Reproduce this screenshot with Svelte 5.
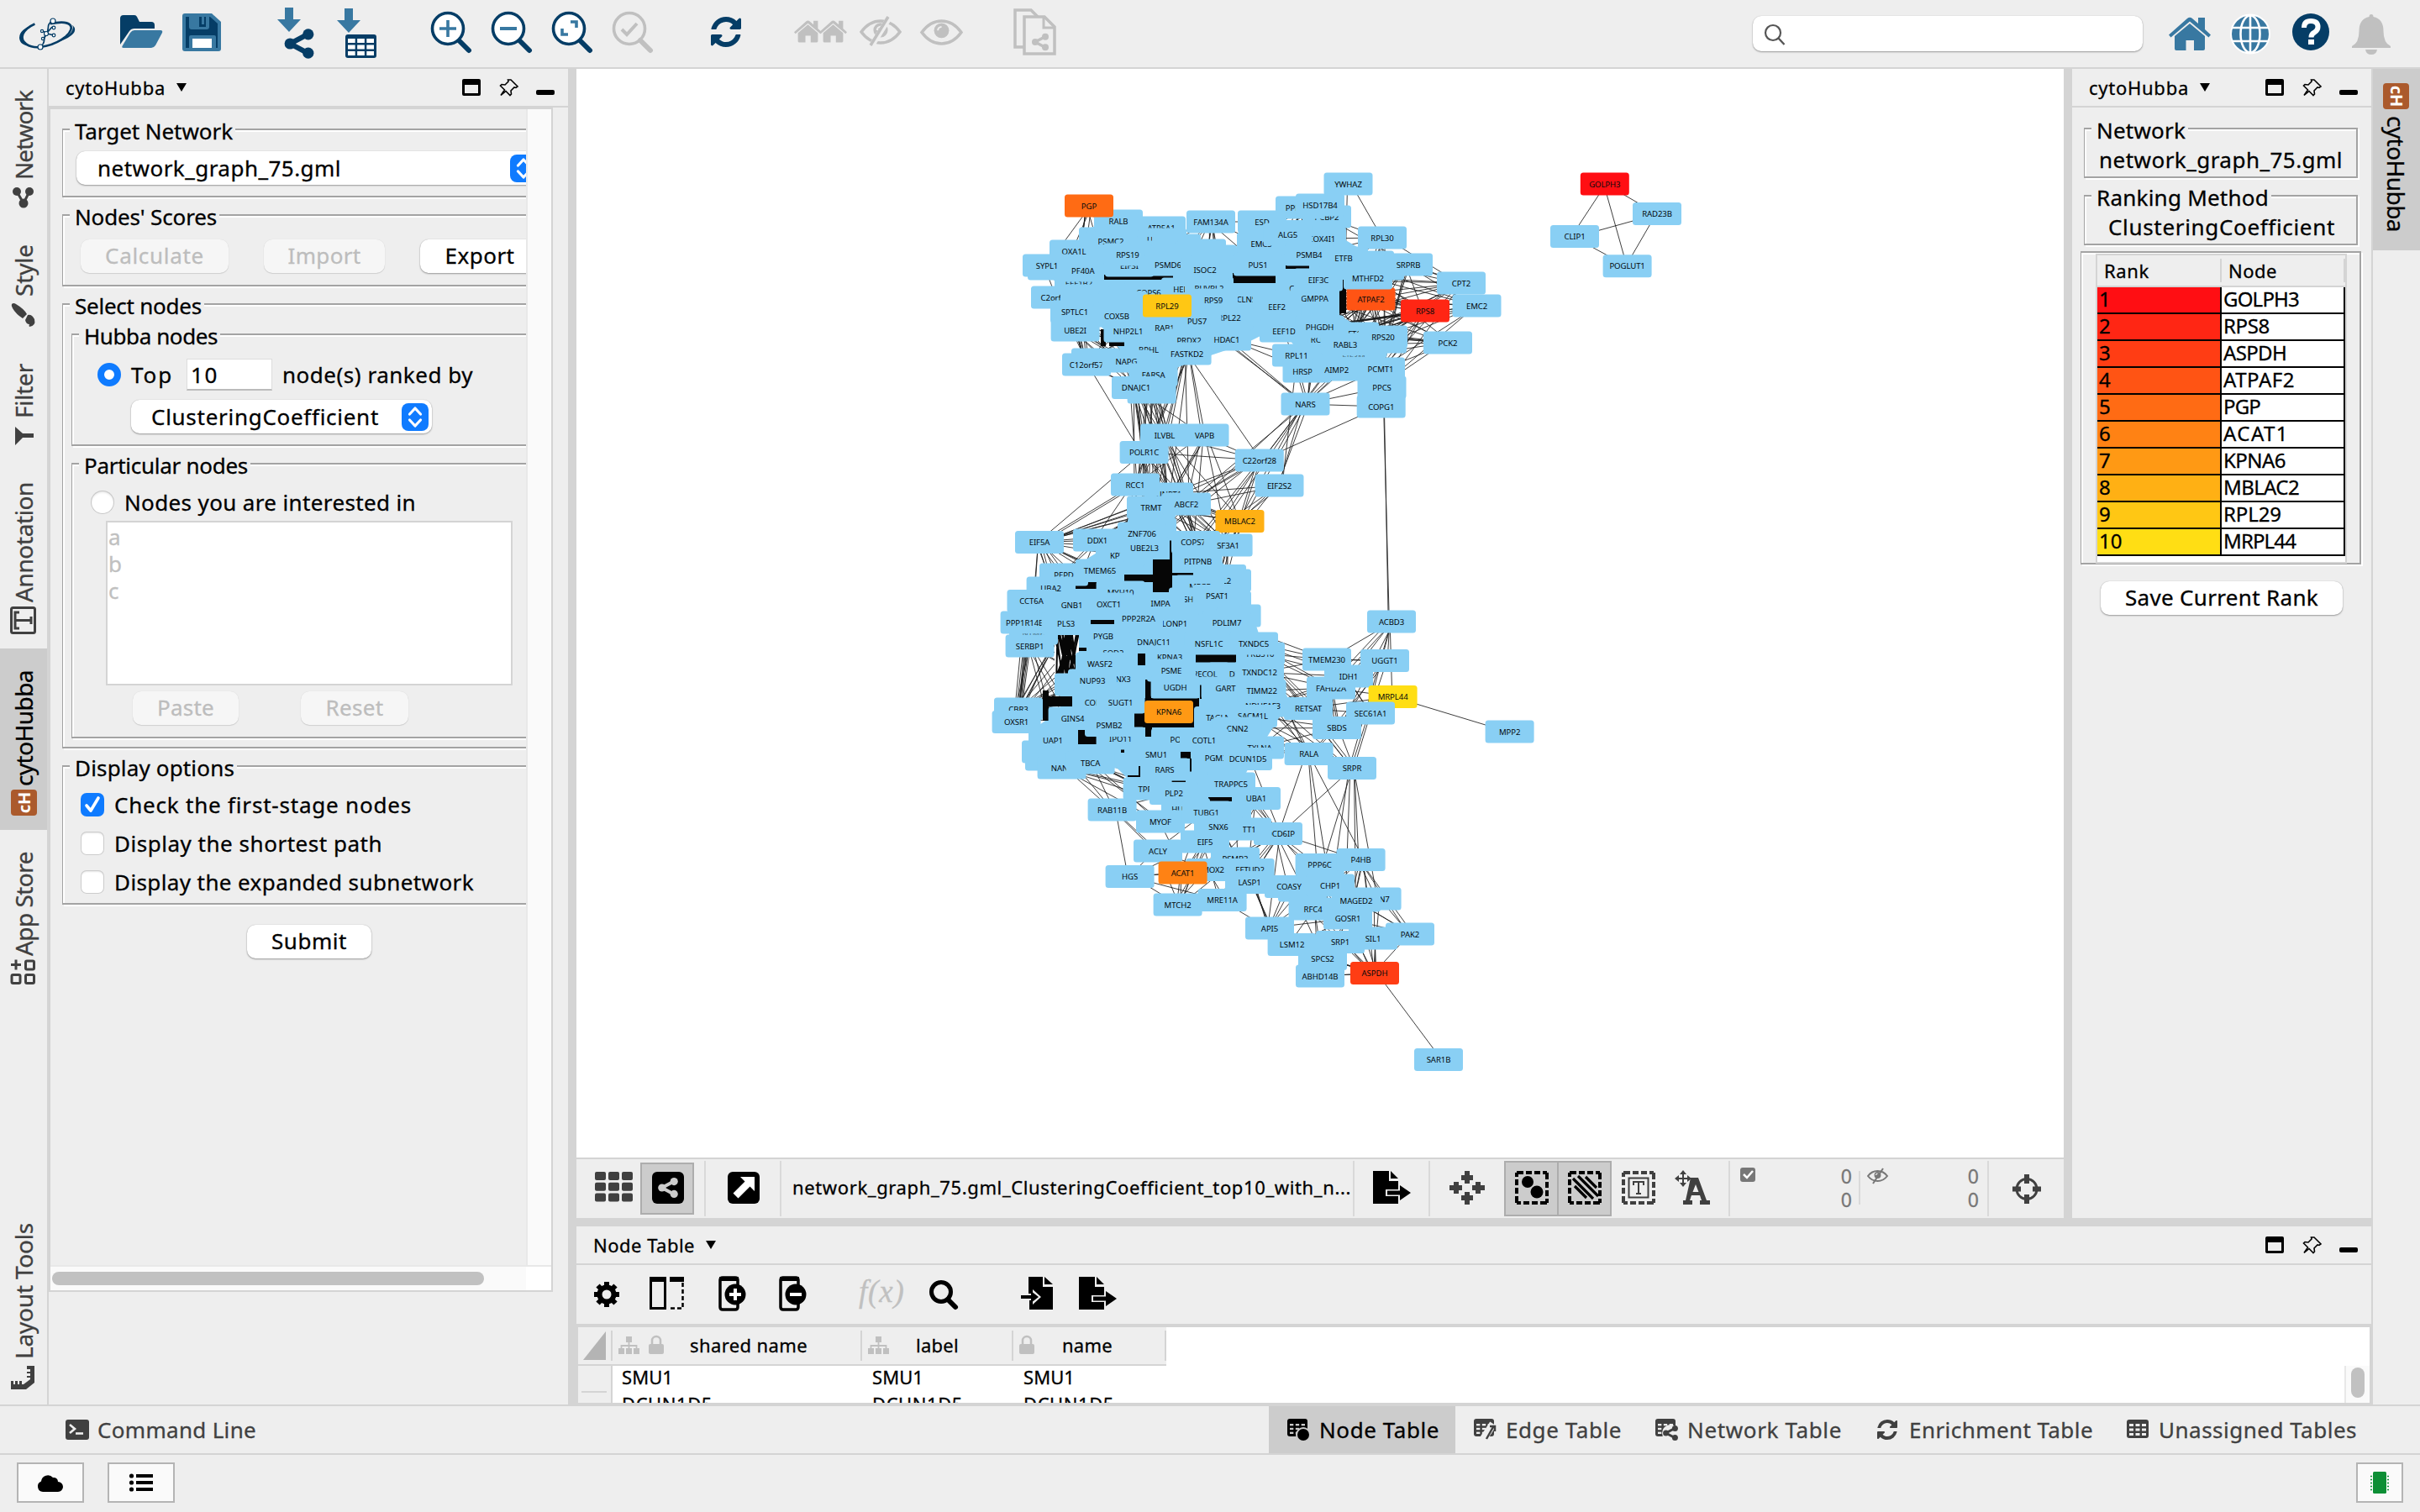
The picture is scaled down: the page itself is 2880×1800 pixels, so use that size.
<script>
  // Stretches or tightens a label's tracking so that it fills the given length.
  function fit(node, length) {
    if (!length) return;
    const vertical = getComputedStyle(node).writingMode !== 'horizontal-tb';
    const box = node.getBoundingClientRect();
    const natural = vertical ? box.height : box.width;
    node.style.letterSpacing = (length - natural) / node.textContent.length + 'px';
  }

  const NAVY = '#053d66';
  const BLUE = '#3878a1';
  const OFF = '#c0c0c0';
  const INK = '#404040';

  const share = (x, y, s, c, r = 6) =>
    `<g fill="${c}" stroke="${c}"><path d="M${x + s * 0.8} ${y + s * 0.18}L${x + s * 0.2} ${y + s * 0.5}L${x + s * 0.8} ${y + s * 0.82}" fill="none" stroke-width="${s * 0.17}"/><circle cx="${x + s * 0.8}" cy="${y + s * 0.19}" r="${r}" stroke="none"/><circle cx="${x + s * 0.2}" cy="${y + s * 0.5}" r="${r}" stroke="none"/><circle cx="${x + s * 0.8}" cy="${y + s * 0.81}" r="${r}" stroke="none"/></g>`;
  const lens = (x, c, inner) =>
    `<path d="M${x + 34} 48l12 12" stroke="${c}" stroke-width="6" stroke-linecap="round"/><circle cx="${x + 21}" cy="34" r="18.5" fill="${c === OFF ? 'none' : '#fff'}" stroke="${c}" stroke-width="3.6"/>${inner}`;
  const refresh = (x, y, s, c) =>
    `<path fill="${c}" transform="translate(${x} ${y}) scale(${s / 1536})" d="M1511 928q0 5-1 7-64 268-268 434.500t-478 166.500q-146 0-282.500-55t-243.500-157l-129 129q-19 19-45 19t-45-19-19-45v-448q0-26 19-45t45-19h448q26 0 45 19t19 45-19 45l-137 137q71 66 161 102t187 36q134 0 250-65t186-179q11-17 53-117 8-23 30-23h192q13 0 22.500 9.500t9.500 22.500zm25-800v448q0 26-19 45t-45 19h-448q-26 0-45-19t-19-45 19-45l138-138q-148-137-349-137-134 0-250 65t-186 179q-11 17-53 117-8 23-30 23h-199q-13 0-22.500-9.500t-9.500-22.500v-7q65-268 270-434.500t480-166.500q146 0 284 55.500t245 156.500l130-129q19-19 45-19t45 19 19 45z"/>`;
  const eye = (x, y, w, h, c, sw) => {
    const m = y + h / 2;
    return `<path d="M${x + 1} ${m}Q${x + w * 0.22} ${y} ${x + w / 2} ${y}T${x + w - 1} ${m}Q${x + w * 0.78} ${y + h} ${x + w / 2} ${y + h}T${x + 1} ${m}z" fill="none" stroke="${c}" stroke-width="${sw}"/><circle cx="${x + w / 2}" cy="${m - h * 0.08}" r="${h * 0.33}" fill="${c}"/><path d="M${x + w / 2 - h * 0.16} ${m - h * 0.08}a${h * 0.16} ${h * 0.16} 0 0 1 ${h * 0.16}-${h * 0.16}" fill="none" stroke="#eee" stroke-width="${sw * 0.6}"/>`;
  };
  const house = (x, y, s, c) =>
    `<path transform="translate(${x} ${y}) scale(${s / 50})" fill="${c}" d="M0 21.500L22 2q3-2.500 6 0l7 6V1h8v14l7 6.500-2.500 3L25 5.500 2.500 24.500zM7 23L25 8l18 15v15q0 2-2 2H30V28h-9.500v12H9q-2 0-2-2z"/>`;
  const grid = (x, y, w, h, c, bg, top = 5) => {
    const cw = (w - 11) / 3;
    const ch = (h - top - 8) / 3;
    let s = `<rect x="${x}" y="${y}" width="${w}" height="${h}" rx="3" fill="${c}"/>`;
    for (let r = 0; r < 3; r++)
      for (let k = 0; k < 3; k++)
        s += `<rect x="${x + 3 + k * (cw + 2.500)}" y="${y + top + r * (ch + 2.500)}" width="${cw}" height="${ch}" fill="${bg}"/>`;
    return s;
  };
  const dashed = (x, c) =>
    `<rect x="${x + 2}" y="1396" width="36" height="36" fill="none" stroke="${c}" stroke-width="4" stroke-dasharray="8 3 7 3 7 3 5 0"/>`;
  const exportDoc = (x, y) =>
    `<path d="M${x} ${y}h19v12h11v10h-15v8h15v9h-30zM${x + 21} ${y}l9 9h-9z"/><path d="M${x + 17} ${y + 23.500}h15v-6.500l13 9-13 9v-6.500h-15z"/>`;

  const mainTools = [
    { x: 22, w: 70, d: `<g transform="rotate(-10 57 42)"><path d="M44 26C28 30 22 40 30 48C40 58 64 55 78 47C92 38 88 28 62 29" fill="none" stroke="${NAVY}" stroke-width="2.6"/><path d="M56 54q34-6 32-19q10 14-32 19z" fill="${NAVY}"/><path d="M42 27q-16 5-16 13q-1 7 8 11q-12-3-11-12q2-10 19-12z" fill="${NAVY}"/></g><path d="M62 25C54 30 60 34 55 40S56 50 48 56M50 37l6 2 6-7M52 46l4-6 8 2" fill="none" stroke="${NAVY}" stroke-width="1.700"/><g fill="#fff" stroke="${NAVY}" stroke-width="1.200"><circle cx="63" cy="25" r="3"/><circle cx="48" cy="56" r="3"/><circle cx="55" cy="40" r="2.500"/><circle cx="50" cy="37" r="1.600"/><circle cx="64" cy="33" r="1.800"/><circle cx="64" cy="42" r="1.800"/><circle cx="51" cy="46" r="1.600"/></g>` },
    { x: 140, w: 56, d: `<path d="M143 22a4 4 0 0 1 4-4h13q2 0 3 2l3 6h14q4 0 4 4v4h-24q-4 0-6 3l-11 16z" fill="${NAVY}"/><path d="M160 36h31q3 0 2 3l-8 15q-2 3-5 3h-33q-3 0-1-3l9-15q2-3 5-3z" fill="${BLUE}"/>` },
    { x: 215, w: 50, d: `<path d="M220 16h32l11 10v32a3 3 0 0 1-3 3h-40a3 3 0 0 1-3-3v-39a3 3 0 0 1 3-3z" fill="${BLUE}"/><path d="M221 20h29l9 8v29h-2v-13q0-2-2-2h-28q-2 0-2 2v13h-4z" fill="${NAVY}"/><path d="M225 18h24v14q0 3-3 3h-18q-3 0-3-3z" fill="${BLUE}"/><path d="M237 20h8v12h-8z" fill="${NAVY}"/><path d="M240 20h3v9h-3z" fill="${BLUE}"/><path d="M229 46h23v11h-23z" fill="#fff"/>` },
    { x: 328, w: 50, d: `<path d="M339 9h10v14h9l-14 15-14-15h9z" fill="${BLUE}"/>${share(338, 34, 36, NAVY, 6.600)}` },
    { x: 400, w: 52, d: `<path d="M410 10h10v14h9l-14 15-14-15h9z" fill="${BLUE}"/>${grid(411, 41, 37, 28, NAVY, '#fff')}` },
    { x: 510, w: 52, d: lens(512, NAVY, `<path d="M523 34h20M533 24v20" stroke="${BLUE}" stroke-width="3.600"/>`) },
    { x: 582, w: 52, d: lens(584, NAVY, `<path d="M595 34h20" stroke="${BLUE}" stroke-width="4"/>`) },
    { x: 654, w: 52, d: lens(656, NAVY, `<path d="M679 26h7v7M669 34v7h7" fill="none" stroke="${BLUE}" stroke-width="3.600"/>`) },
    { x: 726, w: 52, d: lens(728, OFF, `<path d="M740 35l6 6 12-13" fill="none" stroke="${OFF}" stroke-width="4"/>`) },
    { x: 843, w: 42, d: refresh(846, 20, 36, NAVY) },
    { x: 943, w: 68, d: house(945, 24, 33, OFF) + house(975, 24, 33, OFF) },
    { x: 1021, w: 54, d: eye(1024, 25, 48, 26, OFF, 3.500) + `<path d="M1059 20l-22 35" stroke="#eee" stroke-width="7"/><path d="M1057 20l-21 34" stroke="${OFF}" stroke-width="3.500"/>` },
    { x: 1093, w: 56, d: eye(1096, 25, 49, 27, OFF, 3.500) },
    { x: 1204, w: 56, d: `<path d="M1219 56h-11V12h19l8 8" fill="none" stroke="${OFF}" stroke-width="3.500"/><path d="M1219 20h24l12 12v32h-36z" fill="#eee" stroke="${OFF}" stroke-width="3.500"/><path d="M1242 20v13h13" fill="none" stroke="${OFF}" stroke-width="3"/>${share(1228, 40, 20, OFF, 4)}` }
  ];
  const helpTools = [
    { x: 2579, w: 56, d: house(2581, 20, 50, BLUE) },
    { x: 2651, w: 54, d: `<circle cx="2678" cy="40.500" r="24" fill="#fff"/><circle cx="2678" cy="40.500" r="22" fill="${BLUE}"/><path d="M2656 33h44M2656 49h44M2678 18v45" stroke="#fff" stroke-width="2.600"/><ellipse cx="2678" cy="40.500" rx="11.500" ry="22" fill="none" stroke="#fff" stroke-width="2.600"/>` },
    { x: 2725, w: 50, d: `<circle cx="2750" cy="38" r="22" fill="${NAVY}"/><path d="M2742 33q0-8 8-8 8.500 0 8.500 7 0 4-4 6.500-4 2-4 6" fill="none" stroke="#fff" stroke-width="6"/><path d="M2747 47h7v6h-7z" fill="#fff"/>` },
    { x: 2797, w: 50, d: `<path d="M2822 17q2.500 0 2.500 3 12 2.500 12 17 0 14 8.500 18v2h-46v-2q8.500-4 8.500-18 0-14.500 12-17 0-3 2.500-3z" fill="${OFF}"/><path d="M2815 59q1 6 7 6t7-6z" fill="${OFF}"/>` }
  ];
  const winTools = `<path d="M2 0h18q2 0 2 2v16q0 2-2 2H2q-2 0-2-2V2q0-2 2-2zM3 7v10h16V7z" fill-rule="evenodd"/><path d="M58 1l8 8-2 1.500-2-.5-4 4 .5 4-1.500 1.500-5-5-6 5 4.500-6.500-5-5 1.500-1.500 4 .5 4-4-.5-2z" fill="none" stroke="#000" stroke-width="1.600"/><rect x="88" y="13" width="22" height="6" rx="2"/>`;

  const cH = (y, a, x) =>
    `<rect x="${x}" y="${y}" width="31" height="31" rx="4" fill="#ab5a2c"/><text transform="translate(${x + 15.500} ${y + 15.500}) rotate(${a})" x="0" y="7" text-anchor="middle" font-size="20" font-weight="700" fill="#fff" font-family="Noto Sans">cH</text>`;

  // Side tabs: vertical extent of the tab, length of its label, icon box
  const sideTabs = [
    { label: 'Network', h: 183, len: 106, iy: 222, ih: 27, d: `<g fill="${INK}"><circle cx="20" cy="229" r="5"/><circle cx="35" cy="229" r="5"/><circle cx="28" cy="243" r="5.500"/></g><path d="M20 229l8 14 7-14" fill="none" stroke="${INK}" stroke-width="3"/>` },
    { label: 'Style', h: 142, len: 62, iy: 361, ih: 30, d: `<path d="M14 363q2-2 5 0 10 6 13 12l-5 5q-8-5-12-12-2-3-1-5zM33 376q5-1 8 5 2 8-6 9-1-1 0-3-4 0-5-5z" fill="${INK}"/>` },
    { label: 'Filter', h: 141, len: 65, iy: 508, ih: 24, d: `<path d="M18 509l9 8h13v5h-13l-9 9z" fill="${INK}"/>` },
    { label: 'Annotation', h: 224, len: 143, iy: 723, ih: 34, d: `<rect x="13.500" y="725.500" width="28" height="30" rx="2" fill="none" stroke="${INK}" stroke-width="3"/><path d="M23 731h-5v19h5M18 740.500h19M37 736v9" fill="none" stroke="${INK}" stroke-width="3"/>` },
    { label: 'cytoHubba', h: 216, len: 138, active: true, iy: 940, ih: 31, d: cH(940, -90, 13) },
    { label: 'App Store', h: 202, len: 124, iy: 1142, ih: 32, d: `<g fill="none" stroke="${INK}" stroke-width="3"><rect x="14" y="1161.500" width="10" height="10" rx="1.500"/><rect x="30.500" y="1161.500" width="10" height="10" rx="1.500"/><rect x="30.500" y="1145" width="10" height="10" rx="1.500"/><path d="M13 1149.500h12M19 1143.500v12"/></g>` }
  ];
  const layoutTab = { label: 'Layout Tools', len: 162, iy: 1625, ih: 30, d: `<path d="M32 1626h9v20l-10 8h-18v-10h3v4h2v-4h3v4h2v-4h3v4h2l8-6v-2h-4v-2h4v-3h-4v-2h4v-3h-4z" fill="${INK}"/>` };

  const viewTools = {
    grid: { x: 706, w: 50, d: [0, 1, 2].map((r) => [0, 1, 2].map((c) => `<rect x="${708 + c * 16}" y="${1395 + r * 12.700}" width="13" height="10" rx="2" fill="${INK}"/>`).join('')).join('') },
    share: { x: 776, w: 38, d: `<rect x="776" y="1395" width="38" height="38" rx="6"/>${share(783, 1402, 24, '#ccc', 4.600)}` },
    ext: { x: 866, w: 38, d: `<rect x="866" y="1395" width="38" height="38" rx="6"/><path d="M881 1401h17v17l-5.500-5.500-14 14-6-6 14-14z" fill="#fff"/>` },
    exp: { x: 1634, w: 46, d: exportDoc(1634, 1394) },
    move: { x: 1724, w: 44, d: `<path d="M1743 1394h6v5h4v6h-4v4h-6v-4h-4v-6h4zM1743 1434h6v-5h4v-6h-4v-4h-6v4h-4v6h4zM1725 1411v6h5v4h6v-4h4v-6h-4v-4h-6v4zM1767 1411v6h-5v4h-6v-4h-4v-6h4v-4h6v4z" fill="${INK}"/>` },
    nodes: { x: 1802, w: 40, d: dashed(1802, '#000') + `<circle cx="1817" cy="1407" r="7"/><circle cx="1828" cy="1419" r="7.500"/>` },
    edges: { x: 1866, w: 40, d: dashed(1866, '#000') + `<path d="M1872 1403l24 24M1878 1400l24 24M1874 1412l14 14M1887 1401l13 13" stroke="#000" stroke-width="3.200"/>` },
    text: { x: 1930, w: 40, d: dashed(1930, INK) + `<rect x="1938.500" y="1402.500" width="23" height="23" fill="none" stroke="${INK}" stroke-width="2"/><path d="M1944 1411v-4h12v4M1950 1407v14M1947 1421h6" fill="none" stroke="${INK}" stroke-width="2"/>` },
    label: { x: 1993, w: 44, d: `<path d="M2003 1393l4 5h-3v4h4v-3l5 4-5 4v-3h-4v4h3l-4 5-4-5h3v-4h-4v3l-5-4 5-4v3h4v-4h-3z" fill="${INK}"/><path d="M2012 1402h9l10 27h4v5h-12v-5h2l-2-6h-10l-2 6h3v5h-11v-5h3zM2018 1410l-3.500 9h7z" fill="${INK}" fill-rule="evenodd"/>` },
    target: { x: 2393, w: 38, d: `<circle cx="2413" cy="1415.500" r="12" fill="none" stroke="${INK}" stroke-width="3"/><path d="M2413 1398v11M2413 1422v11M2396 1415.500h10M2420 1415.500h10" stroke="${INK}" stroke-width="6"/>` },
    check: { x: 2071, w: 18, d: `<rect x="2071" y="1390" width="18" height="17" rx="3" fill="#777"/><path d="M2075 1398l4 4 7-8" fill="none" stroke="#fff" stroke-width="2.500"/>` },
    hidden: { x: 2222, w: 26, d: eye(2222, 1394, 25, 12, '#777', 2) + `<path d="M2241 1391l-12 18" stroke="#777" stroke-width="2"/>` }
  };

  const plusDoc = (x, s) =>
    `<path d="M${x + 10} 1521h10q3 0 3 3v8M${x + 23} 1552v4q0 3-3 3h-15q-3 0-3-3v-32q0-3 3-3h8" fill="none" stroke="#000" stroke-width="3.500"/><path d="M${x + 1} 1520h23v5h-23z"/><circle cx="${x + 20}" cy="1541" r="12.500"/><path d="${s}" stroke="#fff" stroke-width="4"/>`;
  const tableTools = [
    { x: 706, w: 34, d: `<circle cx="722" cy="1541" r="8.500" fill="none" stroke="#000" stroke-width="6"/><path d="M722 1526v6M722 1550v6M707 1541h6M731 1541h6M711.500 1530.500l4 4M728.500 1547.500l4 4M732.500 1530.500l-4 4M715.500 1547.500l-4 4" stroke="#000" stroke-width="6"/>` },
    { x: 772, w: 44, d: `<path d="M774.500 1521.500h17v36h-17z" fill="none" stroke="#000" stroke-width="3"/><path d="M773 1520h20v6h-20zM797 1520h17v6h-17z"/><path d="M798 1557.500h14.500V1526" fill="none" stroke="#000" stroke-width="2.500" stroke-dasharray="5 3"/>` },
    { x: 854, w: 36, d: plusDoc(855, 'M868 1541h14M875 1534v14') },
    { x: 926, w: 36, d: plusDoc(927, 'M940 1541h14') },
    { text: 'f(x)', x: 1020, w: 60 },
    { x: 1104, w: 38, d: `<circle cx="1120" cy="1538" r="11.500" fill="none" stroke="#000" stroke-width="5"/><path d="M1128 1547l9 9" stroke="#000" stroke-width="6" stroke-linecap="round"/>` },
    { x: 1214, w: 42, d: `<path d="M1224 1520h17v12h12v27h-28v-11l4 0v5l10-9-10-9v5h-5zM1243 1520l10 9h-10z"/><path d="M1215 1542h12v-5l9 7-9 7v-5h-12z"/>` },
    { x: 1284, w: 46, d: exportDoc(1284, 1520) }
  ];

  const tree = (x) => `<g fill="${OFF}"><rect x="${x + 9}" y="1591" width="7" height="7"/><rect x="${x}" y="1605" width="7" height="7"/><rect x="${x + 9}" y="1605" width="7" height="7"/><rect x="${x + 18}" y="1605" width="7" height="7"/></g><path d="M${x + 12.500} 1598v7M${x + 3.500} 1605v-3h18v3" fill="none" stroke="${OFF}" stroke-width="1.800"/>`;
  const lock = (x) => `<rect x="${x}" y="1600" width="18" height="12" rx="2" fill="${OFF}"/><path d="M${x + 4} 1601v-5a5 5 0 0 1 10 0v5" fill="none" stroke="${OFF}" stroke-width="2.500"/>`;
  const columns = [
    { name: 'shared name', cls: 'c1', len: 140, x: 736, w: 56, d: tree(736) + lock(772) },
    { name: 'label', cls: 'c2', len: 51, x: 1034, w: 26, d: tree(1034) },
    { name: 'name', cls: 'c3', len: 60, x: 1214, w: 20, d: lock(1214) }
  ];

  const smallTable = (x, c) => grid(x, 1689, 24, 21, c, '#eee', 6);
  const bottomTabs = [
    { label: 'Node Table', cls: 't1', len: 143, x: 1532, d: grid(1532, 1689, 24, 21, '#000', '#ccc', 6) + `<circle cx="1551" cy="1708" r="9" fill="#ccc"/><circle cx="1551" cy="1708" r="7"/>` },
    { label: 'Edge Table', cls: 't2', len: 138, x: 1755, d: smallTable(1755, INK) + `<path d="M1778 1695l-13 20" stroke="#eee" stroke-width="9"/><path d="M1779 1697l-9 16M1774 1698h6v6" fill="none" stroke="${INK}" stroke-width="2.500"/>` },
    { label: 'Network Table', cls: 't3', len: 184, x: 1970, d: smallTable(1970, INK) + `<circle cx="1988" cy="1706" r="10" fill="#eee"/>` + share(1979, 1697, 18, INK, 3.500) },
    { label: 'Enrichment Table', cls: 't4', len: 219, x: 2234, d: refresh(2234, 1690, 24, INK) },
    { label: 'Unassigned Tables', cls: 't5', len: 236, x: 2531, d: grid(2531, 1690, 26, 22, INK, '#eee', 5) }
  ];

  const ranking = [
    ['GOLPH3', 90, '#ff0e13'], ['RPS8', 55, '#ff2614'], ['ASPDH', 75, '#ff3d14'], ['ATPAF2', 85, '#ff5414'], ['PGP', 44, '#ff6b14'],
    ['ACAT1', 78, '#ff8214'], ['KPNA6', 74, '#ff9914'], ['MBLAC2', 90, '#ffb014'], ['RPL29', 69, '#ffc714'], ['MRPL44', 86, '#ffde14']
  ];

  // Graph nodes in paint order: name, centre x, centre y
  const nodes = [
    ['', 1313, 284], ['PSMC2', 1322, 287], ['', 1252, 320], ['ATP5A1', 1382, 271], ['PCBP2', 1579, 258], ['PPP2CA', 1547, 247], ['RALB', 1331, 263],
    ['UBE2D3', 1383, 285], ['FAM134A', 1441, 264], ['ESD', 1502, 264], ['COX4I1', 1573, 284], ['EMC3', 1501, 290], ['ALG5', 1532.6, 279], ['HSD17B4', 1571, 244], ['YWHAZ', 1604.5, 219],
    ['EIF3I', 1344, 316], ['DLD', 1406, 300], ['', 1400, 292], ['TIAL3', 1443, 305], ['', 1430, 298], ['', 1630, 312], ['', 1642, 320], ['', 1370, 300],
    ['RPL30', 1645, 283], ['RPS19', 1342, 303], ['EEF1B2', 1284, 337], ['PRPF40A', 1283, 322], ['OXA1L', 1278, 299], ['SYPL1', 1246, 316],
    ['PSMD6', 1390, 315], ['HEBP1', 1411, 344], ['RUVBL2', 1439, 343], ['ISOC2', 1434, 321], ['PUS1', 1497, 315], ['ETFB', 1599, 307], ['PSMB4', 1558, 303], ['SRPRB', 1676, 315],
    ['COPS4', 1549, 343], ['EIF3C', 1569, 333], ['C2orf47', 1256, 354], ['', 1291, 352], ['COPS6', 1367, 348], ['CLNS1A', 1489, 356], ['RPS9', 1444, 357],
    ['GMPPA', 1564.5, 355], ['EEF2', 1519.6, 365], ['CPT2', 1739, 337], ['EMC2', 1757.5, 364], ['ATPAF2', 1631.5, 356, '#ff5414'], ['MTHFD2', 1628, 331], ['RPS8', 1696, 370, '#ff2614'],
    ['', 1336, 360], ['SPTLC1', 1279, 371], ['COX5B', 1329, 376], ['RPL22', 1463, 378], ['RAB1A', 1389, 390], ['PRDX2', 1415, 405], ['PUS7', 1424.5, 382], ['RPL29', 1389, 364, '#ffc714'],
    ['UBE2I', 1279.6, 393], ['NHP2L1', 1342.5, 394], ['HDAC1', 1460, 404], ['EIF3M', 1611, 424], ['RCN2', 1572, 404], ['FT1', 1612, 397], ['EEF1D', 1528, 394], ['PHGDH', 1570.6, 389],
    ['', 1645, 407], ['RPS20', 1646, 401], ['RABL3', 1601, 410], ['RPL11', 1543, 423], ['PCK2', 1723, 408], ['HRSP12', 1555.5, 442], ['', 1620, 438], ['AIMP2', 1590.6, 440],
    ['PCMT1', 1643, 439], ['PPCS', 1644.5, 461], ['COPG1', 1643.7, 484], ['NARS', 1553.5, 481], ['', 1304, 428], ['C12orf57', 1293, 434], ['BPHL', 1367, 416], ['FASTKD2', 1412.6, 421],
    ['NAPG', 1340.5, 430], ['FARSA', 1372.6, 446], ['', 1370.6, 467], ['DNAJC1', 1352, 461.6], ['PGP', 1296, 245, '#ff6b14'],
    ['VAPB', 1433.5, 518], ['ILVBL', 1386, 518], ['POLR1C', 1361.6, 538.6], ['C22orf28', 1498.8, 548], ['EIF2S2', 1522.5, 578],
    ['UNPT1', 1391, 588], ['RCC1', 1351, 577], ['TRMT', 1370, 604], ['ABCF2', 1412, 600], ['', 1371, 630], ['ZNF706', 1359, 635],
    ['EIF5A', 1237, 645.6], ['KPTN', 1333, 661], ['DDX1', 1306, 643], ['UBE2L3', 1362, 652.6], ['MBLAC2', 1475.5, 620.6, '#ffb014'], ['COPS7A', 1423, 645.6], ['SF3A1', 1461.6, 649],
    ['', 1454, 685.6], ['L2', 1460, 691], ['PITPNB', 1425.6, 668.6], ['PEPD', 1266, 684], ['TMEM65', 1309, 679], ['UBA2', 1250.6, 700], ['MYH10', 1333.6, 705], ['', 1460, 717], ['MFGE', 1428, 698],
    ['', 1471.6, 733], ['CCT6A', 1227.5, 715.6], ['GNB1', 1275.5, 720], ['OXCT1', 1319.5, 719], ['SH3B', 1420, 713], ['IMPA', 1381, 718.6], ['PSAT1', 1448.5, 709.6], ['NTMB', 1230, 754],
    ['PPP1R14B', 1219.6, 741], ['PLS3', 1268.6, 742.6], ['PDLIM7', 1460, 741], ['LONP1', 1398, 742], ['PPP2R2A', 1355, 736.6], ['SERBP1', 1225.6, 769], ['PYGB', 1313, 757],
    ['FKB510', 1500, 778], ['DNAJC11', 1373, 764], ['NSFL1C', 1438.6, 766], ['TXNDC5', 1492, 766], ['SOD2', 1325, 777], ['WASF2', 1309, 790], ['SNX3', 1334, 808], ['', 1284, 815],
    ['NUP93', 1300, 810], ['KPNA3', 1392, 782], ['DDI2', 1467, 802], ['RECOL', 1434, 802], ['TXNDC12', 1499, 800.6], ['PSME', 1394, 798], ['UGDH', 1398.6, 818],
    ['NDUFAF3', 1503, 840], ['GART', 1458.6, 819], ['TIMM22', 1501.6, 822.6], ['COPB2', 1306, 836.6], ['SUGT1', 1333.6, 836], ['CBR3', 1212, 844], ['OXSR1', 1209.6, 859.6],
    ['TAGLN', 1450, 854.6], ['SACM1L', 1491, 852.6], ['IPO11', 1333.6, 879], ['GINS4', 1276.6, 855], ['PSMB2', 1320, 863.6], ['CNN2', 1472.6, 867], ['KPNA6', 1391, 847.6, '#ff9914'],
    ['', 1245, 895], ['UAP1', 1253, 881], ['PO', 1399, 880.6], ['COTL1', 1433, 881], ['TXLNA', 1499, 890], ['CAPZ', 1249, 904], ['NANS', 1263.6, 914], ['TBCA', 1297.6, 908],
    ['SMU1', 1376, 898.6], ['RARS', 1386, 916], ['PGM3', 1447, 902.6], ['DCUN1D5', 1485, 903.6], ['TPP2', 1365.6, 939], ['', 1440, 932], ['TRAPPC5', 1465, 933], ['UBA1', 1495, 950.6],
    ['RAB11B', 1323.6, 964], ['HUWE1', 1411, 963.6], ['PLP2', 1397, 944.6], ['MYOF', 1381, 978], ['', 1460, 975], ['TUBG1', 1435.6, 967], ['PDCD6IP', 1521, 992.6], ['STT1', 1484, 987],
    ['EIF5', 1434, 1002], ['SNX6', 1450, 984], ['ACLY', 1378, 1013], ['PSMB3', 1470, 1022], ['HMOX2', 1440, 1035.6], ['ACAT1', 1407.6, 1039, '#ff8214'], ['HGS', 1344.6, 1043.6],
    ['EFTUD2', 1487.6, 1035.6], ['LASP1', 1487, 1050.6], ['MTCH2', 1401.6, 1077], ['MRE11A', 1454.6, 1071.6], ['API5', 1511, 1105], ['', 1550, 1060], ['COASY', 1534, 1055.6],
    ['PPP6C', 1570.6, 1029.6], ['P4HB', 1619.6, 1023.6], ['CHP1', 1583, 1054], ['CAPN7', 1638.6, 1070], ['RFC4', 1562.6, 1082], ['GOSR1', 1604, 1093], ['MAGED2', 1614, 1072],
    ['LSM12', 1537.6, 1124.6], ['PAK2', 1678, 1112], ['SIL1', 1634, 1117], ['SRP1', 1595, 1121.6], ['SPCS2', 1574, 1141.6], ['ABHD14B', 1571, 1162], ['ASPDH', 1636, 1158.6, '#ff3d14'], ['SAR1B', 1712, 1261.6],
    ['FAHD2A', 1584, 819], ['IDH1', 1605, 805], ['TMEM230', 1579, 785], ['ACBD3', 1656, 740], ['UGGT1', 1648, 786.5], ['MRPL44', 1657.6, 829.6, '#ffde14'], ['RETSAT', 1557, 843.6],
    ['SBDS', 1591, 866.6], ['SEC61A1', 1631, 849], ['RALA', 1557.6, 897.6], ['SRPR', 1609, 914.6], ['MPP2', 1796.6, 871],
    ['GOLPH3', 1909.8, 219, '#ff0e13'], ['RAD23B', 1972, 254.5], ['CLIP1', 1874, 281.6], ['POGLUT1', 1936.6, 316.8]
  ];

  const at = {};
  for (const n of nodes) if (n[0]) at[n[0]] = n;

  let seed = 7;
  const rnd = () => (seed = (seed * 16807) % 2147483647) / 2147483647;

  const lines = [];
  const link = (a, b) => {
    if (!at[a] || !at[b]) return;
    const j = () => (rnd() - 0.5) * 8;
    lines.push(`M${(at[a][1] + j()).toFixed(1)} ${at[a][2]}L${(at[b][1] + j()).toFixed(1)} ${at[b][2]}`);
  };
  const bundle = (from, to, p = 1) => {
    for (const a of from.split(' ')) for (const b of to.split(' ')) if (a !== b && rnd() < p) link(a, b);
  };
  const mesh = (keep, reach, p) => {
    const set = nodes.filter((n) => n[0] && keep(n[1], n[2]));
    for (let i = 0; i < set.length; i++)
      for (let k = i + 1; k < set.length; k++)
        if (Math.hypot(set[i][1] - set[k][1], set[i][2] - set[k][2]) < reach && rnd() < p) link(set[i][0], set[k][0]);
  };

  mesh((x, y) => y > 250 && y < 470 && x < 1490 && x > 1240, 120, 0.45);
  mesh((x, y) => y > 235 && y < 470 && x > 1470 && x < 1665, 130, 0.4);
  mesh((x, y) => y > 580 && y < 930 && x < 1505, 110, 0.45);
  mesh((x, y) => y > 925 && y < 1110 && x < 1525 && x > 1370, 90, 0.55);
  mesh((x, y) => y > 1010 && y < 1165 && x > 1505 && x < 1670, 100, 0.55);
  mesh((x, y) => y > 780 && y < 920 && x > 1540 && x < 1665, 95, 0.5);
  bundle('PGP', 'RALB PSMC2 OXA1L SYPL1 PRPF40A RPS19 EIF3I EEF1B2 SPTLC1 COX5B UBE2I COPS6');
  bundle('SYPL1', 'C2orf47 EEF1B2 SPTLC1 OXA1L');
  bundle('FAM134A', 'UBE2D3 ESD EMC3 ISOC2 TIAL3 PUS1');
  bundle('YWHAZ', 'ETFB RPL30');
  bundle('RPL30 SRPRB', 'PCBP2 ETFB MTHFD2 ATPAF2 CPT2 COX4I1 RPS20 PSMB4');
  bundle('CPT2 EMC2 PCK2 RPS8', 'MTHFD2 ATPAF2 GMPPA EIF3C PHGDH RPS20 RABL3 PCMT1 FT1 EIF3M PPCS ETFB SRPRB EEF1D', 0.9);
  bundle('ATPAF2 RPS8 MTHFD2 SRPRB', 'RPS20 RABL3 FT1 PHGDH GMPPA EIF3C PCMT1 EIF3M RCN2 EEF1D');
  bundle('C12orf57', 'POLR1C UBE2I NHP2L1 SPTLC1 NAPG DNAJC1 BPHL COX5B RPL29');
  bundle('UBE2I SPTLC1', 'NAPG C12orf57 BPHL DNAJC1 FARSA RPL29');
  bundle('FASTKD2 DNAJC1 FARSA NAPG BPHL NHP2L1', 'POLR1C RCC1 ABCF2 TRMT ILVBL UNPT1', 0.9);
  bundle('FASTKD2', 'C22orf28 VAPB DNAJC1 FARSA');
  bundle('DNAJC1', 'VAPB');
  bundle('PRDX2', 'VAPB POLR1C ILVBL');
  bundle('HDAC1', 'NARS RPL11 EEF1D HRSP12 PHGDH');
  bundle('NARS', 'HRSP12 AIMP2 PCMT1 RPL11 RABL3 RPS20 PHGDH PPCS COPG1 EEF1D HDAC1 PUS7 RCN2 FT1 EIF3M');
  bundle('C22orf28', 'COPG1 POLR1C ILVBL VAPB ABCF2 UNPT1 TRMT');
  bundle('NARS C22orf28', 'SF3A1 COPS7A MBLAC2 ABCF2 PITPNB UBE2L3 C22orf28', 0.9);
  bundle('EIF2S2', 'UNPT1 ABCF2 MBLAC2 SF3A1 COPS7A NARS PITPNB RPL11 NARS');
  bundle('VAPB ILVBL', 'POLR1C RCC1 ABCF2 UNPT1 UBE2L3 SF3A1 COPS7A MBLAC2 ZNF706');
  bundle('POLR1C', 'RCC1 ABCF2 TRMT UNPT1 EIF5A COPS7A ZNF706 UBE2L3');
  bundle('RCC1 TRMT ABCF2 UNPT1', 'ZNF706 DDX1 UBE2L3 COPS7A SF3A1 MBLAC2 PITPNB KPTN EIF5A');
  bundle('EIF5A', 'RCC1 TRMT UNPT1 ABCF2 DDX1 PEPD UBE2L3 IMPA ZNF706 TMEM65 UBA2 CCT6A MYH10 OXCT1 GNB1 KPTN PLS3');
  bundle('MBLAC2 SF3A1', 'PITPNB L2 PSAT1 COPS7A MFGE');
  bundle('COPG1', 'ACBD3');
  bundle('PPCS', 'ACBD3');
  bundle('CBR3 OXSR1', 'SERBP1 WASF2 PLS3 NUP93 PPP1R14B GNB1 PYGB GINS4 OXCT1 SNX3 SOD2 CCT6A');
  bundle('SERBP1 PLS3', 'UAP1 GINS4 NUP93 WASF2 TBCA PYGB NANS OXSR1');
  bundle('ACBD3', 'TMEM230 UGGT1 IDH1 FAHD2A MRPL44 SEC61A1 RETSAT SBDS SRPR');
  bundle('TMEM230', 'UGGT1 PDLIM7 TXNDC5 FKB510 TXNDC12 IDH1 SBDS');
  bundle('UGGT1 SEC61A1 MRPL44', 'SRPR SBDS RETSAT IDH1 FAHD2A RALA', 0.8);
  bundle('TXNDC5 TXNDC12 TIMM22 FKB510 NDUFAF3', 'FAHD2A RETSAT RALA SBDS IDH1 SRPR', 0.7);
  bundle('SACM1L CNN2 TXLNA', 'RALA RETSAT SBDS SRPR', 0.9);
  bundle('RALA', 'PDCD6IP P4HB PPP6C CHP1');
  bundle('SRPR', 'PDCD6IP P4HB PPP6C CHP1 MAGED2 CAPN7 GOSR1');
  bundle('PDCD6IP', 'P4HB PPP6C COASY LASP1 UBA1 TRAPPC5 EFTUD2 CHP1 RFC4 PSMB3 API5 HMOX2 TUBG1 DCUN1D5 GOSR1 MRE11A');
  bundle('NANS TBCA UAP1', 'RAB11B TPP2 MYOF PLP2 HUWE1', 0.9);
  bundle('RAB11B', 'HGS ACLY TPP2 ACAT1 SNX6 PLP2');
  bundle('HGS', 'ACAT1 ACLY MTCH2 HMOX2 MRE11A EIF5');
  bundle('MTCH2', 'ACAT1 HMOX2 EIF5 ACLY PSMB3 SNX6 LASP1');
  bundle('API5', 'LASP1 MRE11A COASY RFC4 EFTUD2 CHP1 LSM12');
  bundle('P4HB', 'CAPN7 PAK2 MAGED2 CHP1 GOSR1 SIL1 RFC4 SRP1');
  bundle('PAK2', 'CAPN7 MAGED2 SIL1 GOSR1 ASPDH CHP1 P4HB');
  bundle('ASPDH', 'SIL1 SRP1 SPCS2 GOSR1 ABHD14B LSM12 SAR1B MAGED2 RFC4 CAPN7');
  bundle('MPP2', 'MRPL44');
  bundle('GOLPH3', 'RAD23B CLIP1 POGLUT1');
  bundle('RAD23B', 'CLIP1 POGLUT1');
  bundle('CLIP1', 'POGLUT1');
  const edgePath = lines.join('');

  // Solid cores where nodes overlap completely, and the saturated edge areas inside them
  const cores = [
    '1300,270 1400,270 1411,290 1475,300 1475,262 1560,262 1600,285 1625,300 1650,322 1650,340 1594,345 1594,375 1615,388 1655,400 1650,425 1610,440 1560,435 1535,405 1500,400 1480,410 1420,430 1395,440 1385,470 1345,455 1340,425 1310,388 1260,385 1260,330 1270,305',
    '1350,620 1430,640 1455,670 1470,690 1490,730 1500,760 1520,780 1525,850 1500,890 1480,925 1490,965 1400,965 1350,935 1330,915 1240,900 1230,868 1262,845 1262,800 1256,757 1240,740 1240,700 1270,680 1310,655'
  ];
  const dark = [
    [1314, 327, 82, 6], [1467, 325, 51, 12], [1530, 314, 28, 6], [1308, 359, 21, 3], [1594, 333, 8, 40], [1310, 392, 6, 20], [1320, 406, 18, 6],
    [1372, 666, 23, 39], [1338, 684, 34, 9], [1395, 682, 25, 3], [1392, 643, 3, 24], [1280, 693, 25, 8], [1298, 738, 28, 5], [1284, 771, 9, 4],
    [1354, 778, 10, 14], [1363, 809, 7, 24], [1350, 831, 77, 35], [1363, 862, 8, 15], [1423, 779, 48, 10], [1428, 815, 2, 17], [1242, 829, 34, 12], [1241, 822, 7, 36],
    [1283, 869, 22, 17], [1334, 892, 4, 4], [1405, 895, 12, 8], [1416, 903, 2, 27], [1394, 929, 24, 2], [1342, 923, 15, 2], [1355, 912, 2, 12], [1438, 949, 28, 5]
  ];
  // Area where individual edges still show through the black
  const weave = Array.from({ length: 26 }, () => `M${1255 + rnd() * 29} 756L${1255 + rnd() * 29} 802`).join('');
</script>

{#snippet glyph(g, y, h, from)}
  <svg class="glyph" width={g.w} height={h} viewBox="{g.x} {y} {g.w} {h}" style:margin-left="{from === undefined ? 0 : g.x - from}px">{@html g.d}</svg>
{/snippet}

{#snippet head(title, len)}
  <header class="phead">
    <span class="ptitle" use:fit={len}>{title}</span>
    <svg width="14" height="12" viewBox="0 0 14 12"><path d="M1 1h12L7 11z" /></svg>
    <svg class="win" width="112" height="22" viewBox="0 -1 112 22">{@html winTools}</svg>
  </header>
{/snippet}

{#snippet stepper()}
  <svg class="stepper" width="32" height="33" viewBox="0 0 32 33"><rect width="32" height="33" rx="8" fill="#0f7bff" /><path d="M9.500 13l6.500-7 6.500 7M9.500 20l6.500 7 6.500-7" fill="none" stroke="#fff" stroke-width="3.200" stroke-linecap="round" stroke-linejoin="round" /></svg>
{/snippet}

<div class="app">
  <div class="topbar">
    {#each mainTools as t, i}{@render glyph(t, 0, 80, i ? mainTools[i - 1].x + mainTools[i - 1].w : 0)}{/each}
    <div class="search">
      <svg width="28" height="28" viewBox="0 0 28 28"><circle cx="12" cy="11" r="9" fill="none" stroke="#555" stroke-width="2.200" /><path d="M18.500 17.500l7 7.500" stroke="#555" stroke-width="2.400" /></svg>
    </div>
    {#each helpTools as t, i}{@render glyph(t, 0, 80, i ? helpTools[i - 1].x + helpTools[i - 1].w : 2550)}{/each}
  </div>

  <div class="middle">
    <nav class="strip left">
      {#each sideTabs as t}
        <div class="vtab" class:active={t.active} style:height="{t.h}px">
          <span class="vtext up" use:fit={t.len}>{t.label}</span>
          <svg width="56" height={t.ih} viewBox="0 {t.iy} 56 {t.ih}">{@html t.d}</svg>
        </div>
      {/each}
      <div class="vtab last">
        <span class="vtext up" use:fit={layoutTab.len}>{layoutTab.label}</span>
        <svg width="56" height={layoutTab.ih} viewBox="0 {layoutTab.iy} 56 {layoutTab.ih}">{@html layoutTab.d}</svg>
      </div>
    </nav>

    <aside class="control">
      {@render head('cytoHubba', 119)}
      <div class="pane">
        <div class="panerow">
          <div class="form">
            <section class="group g1">
              <span class="legend" use:fit={197}>Target Network</span>
              <div class="combo wide"><span use:fit={290}>network_graph_75.gml</span>{@render stepper()}</div>
            </section>
            <section class="group g2">
              <span class="legend" use:fit={178}>Nodes' Scores</span>
              <div class="row scores">
                <button class="btn off b1"><span use:fit={118}>Calculate</span></button>
                <button class="btn off b2"><span use:fit={87}>Import</span></button>
                <button class="btn b3"><span use:fit={83}>Export</span></button>
              </div>
            </section>
            <section class="group g3">
              <span class="legend" use:fit={160}>Select nodes</span>
              <div class="group g4">
                <span class="legend" use:fit={168}>Hubba nodes</span>
                <div class="row top">
                  <i class="radio on"></i>
                  <span class="lbl" use:fit={50}>Top</span>
                  <span class="field"><span use:fit={33}>10</span></span>
                  <span class="lbl" use:fit={227}>node(s) ranked by</span>
                </div>
                <div class="combo method"><span use:fit={271}>ClusteringCoefficient</span>{@render stepper()}</div>
              </div>
              <div class="group g5">
                <span class="legend" use:fit={204}>Particular nodes</span>
                <div class="row part"><i class="radio"></i><span class="lbl" use:fit={347}>Nodes you are interested in</span></div>
                <div class="area"><span>a</span><span>b</span><span>c</span></div>
                <div class="row pr">
                  <button class="btn off b4"><span use:fit={68}>Paste</span></button>
                  <button class="btn off b5"><span use:fit={69}>Reset</span></button>
                </div>
              </div>
            </section>
            <section class="group g6">
              <span class="legend" use:fit={199}>Display options</span>
              <div class="checks">
                <div class="row"><svg class="box on" width="28" height="28" viewBox="0 0 28 28"><path d="M7 15l5 6 9-15" fill="none" stroke="#fff" stroke-width="3.600" stroke-linecap="round" stroke-linejoin="round" /></svg><span use:fit={354}>Check the first-stage nodes</span></div>
                <div class="row"><i class="box"></i><span use:fit={319}>Display the shortest path</span></div>
                <div class="row"><i class="box"></i><span use:fit={428}>Display the expanded subnetwork</span></div>
              </div>
            </section>
            <button class="btn submit"><span use:fit={90}>Submit</span></button>
          </div>
          <div class="vbar"></div>
        </div>
        <div class="hbar"><div class="thumb"></div><div class="corner"></div></div>
      </div>
    </aside>

    <main class="work">
      <div class="upper">
        <div class="view">
          <svg class="graph" width="1770" height="1296" viewBox="686 82 1770 1296">
            <path d={edgePath} stroke="#1c1c1c" stroke-width="1" fill="none" opacity=".85" />
            {#each cores as c}<polygon points={c} fill="#89cff4" />{/each}
            <rect x="1255" y="756" width="29" height="46" fill="#fff" />
            <path d={weave} stroke="#060606" stroke-width="2" fill="none" />
            {#each dark as d}<rect x={d[0]} y={d[1]} width={d[2]} height={d[3]} fill="#060606" />{/each}
            {#each nodes as [name, x, y, color]}
              <rect x={x - 29} y={y - 13.5} width="58" height="27" rx="3.500" fill={color ?? '#89cff4'} />
              {#if name}<text class="nl" {x} y={y + 3.6}>{name}</text>{/if}
            {/each}
          </svg>
          <div class="viewbar">
            {@render glyph(viewTools.grid, 1380, 70, 686)}
            <div class="toggle t-share">{@render glyph(viewTools.share, 1384, 62)}</div>
            <i class="sep s1"></i>
            {@render glyph(viewTools.ext, 1380, 70, 840)}
            <i class="sep s2"></i>
            <span class="vtitle" use:fit={665}>network_graph_75.gml_ClusteringCoefficient_top10_with_n...</span>
            <i class="sep"></i>
            {@render glyph(viewTools.exp, 1380, 70, 1612)}
            <i class="sep s4"></i>
            {@render glyph(viewTools.move, 1380, 70, 1702)}
            <div class="toggle t-nodes">{@render glyph(viewTools.nodes, 1382, 66)}</div>
            <div class="toggle t-edges">{@render glyph(viewTools.edges, 1382, 66)}</div>
            {@render glyph(viewTools.text, 1380, 70, 1918)}
            {@render glyph(viewTools.label, 1380, 70, 1970)}
            <i class="sep s5"></i>
            <div class="count">{@render glyph(viewTools.check, 1390, 18)}<div><span>0</span><span>0</span></div></div>
            <i class="sep short"></i>
            <div class="count second">{@render glyph(viewTools.hidden, 1390, 20)}<div><span>0</span><span>0</span></div></div>
            <i class="sep s7"></i>
            {@render glyph(viewTools.target, 1380, 70, 2368)}
          </div>
        </div>

        <aside class="results">
          {@render head('cytoHubba', 119)}
          <section class="group r1"><span class="legend" use:fit={115}>Network</span><span class="val v1" use:fit={290}>network_graph_75.gml</span></section>
          <section class="group r2"><span class="legend" use:fit={214}>Ranking Method</span><span class="val v2" use:fit={270}>ClusteringCoefficient</span></section>
          <section class="group r3">
            <div class="ranks">
              <div class="rhead"><span class="rk"><span use:fit={54}>Rank</span></span><span class="nd"><span use:fit={58}>Node</span></span></div>
              {#each ranking as [name, len, color], i}
                <div class="rrow"><span class="rc" style:background={color}>{i + 1}</span><span class="nc"><span use:fit={len}>{name}</span></span></div>
              {/each}
            </div>
          </section>
          <button class="btn save"><span use:fit={230}>Save Current Rank</span></button>
        </aside>
      </div>

      <section class="tables">
        {@render head('Node Table', 121)}
        <div class="ttools">
          {#each tableTools as t, i}
            {#if t.text}
              <span class="fx">{t.text}</span>
            {:else}
              {@render glyph(t, 1506, 70, i ? tableTools[i - 1].x + tableTools[i - 1].w : 686)}
            {/if}
          {/each}
        </div>
        <div class="grid">
          <div class="gh">
            <div class="cornercell"><svg width="28" height="36" viewBox="0 0 28 36"><path d="M27 1v34H0z" fill="#b4b4b4" /></svg></div>
            {#each columns as c}
              <div class="th {c.cls}"><svg width={c.w} height="44" viewBox="{c.x} 1580 {c.w} 44">{@html c.d}</svg><span use:fit={c.len}>{c.name}</span></div>
            {/each}
          </div>
          <div class="gbody">
            <div class="rownum"><i></i></div>
            <div class="rows">
              {#each [['SMU1', 61], ['DCUN1D5', 108]] as [v, len]}
                <div class="tr"><span class="d1"><span use:fit={len}>{v}</span></span><span class="d2"><span use:fit={len}>{v}</span></span><span class="d3"><span use:fit={len}>{v}</span></span></div>
              {/each}
            </div>
            <div class="tscroll"><i></i></div>
          </div>
        </div>
      </section>
    </main>

    <nav class="strip right">
      <div class="vtab active rtab">
        <svg width="56" height="31" viewBox="0 99 56 31">{@html cH(99, 90, 12)}</svg>
        <span class="vtext" use:fit={138}>cytoHubba</span>
      </div>
    </nav>
  </div>

  <div class="bottomtabs">
    <div class="cmd">
      <svg width="28" height="26" viewBox="0 0 28 26"><rect width="28" height="24" y="1" rx="3" fill="#404040" /><path d="M5 7l6 5-6 5" fill="none" stroke="#eee" stroke-width="2.600" /><path d="M12 17.500h9" stroke="#eee" stroke-width="2.600" /></svg>
      <span use:fit={189}>Command Line</span>
    </div>
    {#each bottomTabs as t, i}
      <div class="btab {t.cls}" class:active={i === 0}>
        <svg width="27" height="30" viewBox="{t.x} 1687 27 30">{@html t.d}</svg>
        <span use:fit={t.len}>{t.label}</span>
      </div>
    {/each}
  </div>

  <footer class="status">
    <div class="sbtn"><svg width="32" height="24" viewBox="0 0 32 24"><path d="M7 23a6.500 6.500 0 0 1-2-12.500A8 8 0 0 1 19 6a5 5 0 0 1 6 5 6 6 0 0 1 0 12z" /></svg></div>
    <div class="sbtn"><svg width="30" height="24" viewBox="0 0 30 24"><path d="M9 4h20M9 12h20M9 20h20" stroke="#000" stroke-width="4" /><circle cx="3.500" cy="4" r="2.600" /><circle cx="3.500" cy="12" r="2.600" /><circle cx="3.500" cy="20" r="2.600" /></svg></div>
    <div class="sbtn mem"><svg width="24" height="28" viewBox="0 0 24 28"><path d="M1 6.500h22M1 10.500h22M1 14.500h22M1 18.500h22M1 22.500h22" stroke="#0d8f35" stroke-width="1.600" /><rect x="3" y="1" width="18" height="26" rx="1" fill="#fff" /><rect x="4" y="1" width="16" height="26" rx="1.500" fill="#0d8f35" /></svg></div>
  </footer>
</div>

<style>
  :global(body) { margin: 0; background: #eee; }
  .app { width: 2880px; height: 1800px; display: flex; flex-direction: column; background: #eee; color: #000; font-family: 'Noto Sans', 'Open Sans', sans-serif; font-size: 26px; overflow: hidden; white-space: nowrap; -webkit-text-stroke: .3px; }
  .app, .app * { box-sizing: border-box; }
  svg { display: block; flex: none; }
  span { flex: none; }
  button { font: inherit; color: inherit; margin: 0; }

  .topbar { height: 82px; flex: none; display: flex; border-bottom: 2px solid #d4d4d4; }
  .search { width: 464px; height: 42px; margin: 19px 0 0 826px; padding: 9px 0 0 12px; border-radius: 10px; background: #fff; box-shadow: 0 1px 2px rgba(0, 0, 0, .35), 0 0 1px rgba(0, 0, 0, .2); flex: none; }

  .middle { height: 1590px; flex: none; display: flex; }
  .strip { width: 58px; flex: none; display: flex; flex-direction: column; font-size: 28px; color: #404040; }
  .left { border-right: 2px solid #d4d4d4; }
  .right { border-left: 2px solid #d4d4d4; }
  .vtab { flex: none; width: 56px; padding: 26px 0 17px; display: flex; flex-direction: column; justify-content: space-between; align-items: center; }
  .vtab.active { background: #ccc; color: #000; }
  .last { height: 240px; margin-top: auto; padding-top: 24px; }
  .vtext { writing-mode: vertical-rl; line-height: 36px; }
  .up { transform: rotate(180deg); }
  .rtab { height: 216px; padding: 17px 0 22px; }

  .phead { height: 46px; flex: none; display: flex; align-items: center; border-bottom: 2px solid #d4d4d4; padding: 0 14px 1px 20px; font-size: 22px; }
  .ptitle { margin-right: 12px; }
  .win { margin-left: auto; }
  .control { width: 628px; flex: none; border-right: 10px solid #d4d4d4; }
  .pane { width: 600px; height: 1410px; border: 2px solid #d4d4d4; }
  .panerow { height: 1376px; display: flex; }
  .form { width: 566px; flex: none; overflow: hidden; padding-left: 14px; }
  .vbar { width: 30px; flex: none; background: #fafafa; border-left: 2px solid #e8e8e8; }
  .hbar { height: 30px; display: flex; align-items: center; background: #fafafa; border-top: 2px solid #e8e8e8; }
  .thumb { width: 514px; height: 16px; margin-left: 2px; border-radius: 8px; background: #c1c1c1; }
  .corner { width: 30px; height: 28px; margin-left: auto; background: #fff; }

  .group { width: 700px; border: 2px solid #a3a3a3; border-left-width: 1.500px; box-shadow: 2px 2px 0 #fff, inset 2px 2px 0 #fff; }
  .legend { display: block; width: fit-content; margin: -17px 0 0 8px; padding: 0 3px 0 6px; line-height: 36px; background: #eee; }
  .g1 { margin-top: 23px; height: 82px; }
  .g2 { margin-top: 20px; height: 86px; }
  .g3 { margin-top: 20px; height: 530px; }
  .g4 { margin: 15px 0 0 10px; height: 134px; }
  .g5 { margin: 20px 0 0 10px; height: 328px; }
  .g6 { margin-top: 20px; height: 166px; }
  .row { display: flex; align-items: center; }
  .combo { height: 40px; display: flex; align-items: center; justify-content: space-between; padding: 0 4px 0 24px; background: #fff; border-radius: 10px; box-shadow: 0 1px 2px rgba(0, 0, 0, .35), 0 0 1px rgba(0, 0, 0, .25); }
  .wide { width: 552px; margin: 6px 0 0 16px; padding-left: 25px; }
  .method { width: 358px; margin: 11px 0 0 70px; }
  .btn { height: 40px; padding: 0 0 3px; border: 0; border-radius: 10px; background: #fff; display: flex; align-items: center; justify-content: center; flex: none; box-shadow: 0 1px 2px rgba(0, 0, 0, .35), 0 0 1px rgba(0, 0, 0, .25); }
  .off { background: #f6f6f6; color: #bdbdbd; box-shadow: 0 1px 1px rgba(0, 0, 0, .12), 0 0 1px rgba(0, 0, 0, .12); }
  .scores { margin: 9px 0 0 21px; }
  .b1 { width: 176px; }
  .b2 { width: 144px; margin-left: 42px; }
  .b3 { width: 142px; margin-left: 42px; }
  .b4 { width: 126px; }
  .b5 { width: 128px; margin-left: 74px; }
  .pr { margin: 7px 0 0 72px; }
  .radio { width: 28px; height: 28px; flex: none; border-radius: 50%; background: #fff; box-shadow: inset 0 0 0 1px #c8c8c8, inset 0 2px 3px rgba(0, 0, 0, .12); }
  .radio.on { border: 8px solid #0f7bff; box-shadow: none; }
  .top { height: 38px; margin: 9px 0 0 30px; }
  .top .lbl { margin-left: 12px; }
  .field { width: 102px; height: 38px; line-height: 36px; margin-left: 16px; padding-left: 4px; background: #fff; border: 1px solid #ddd; border-bottom: 2px solid #bbb; }
  .part { height: 28px; margin: 12px 0 0 22px; }
  .part .lbl { margin-left: 12px; }
  .area { width: 484px; height: 196px; margin: 8px 0 0 40px; padding: 1px; background: #fff; border: 2px solid #d4d4d4; color: #c0c0c0; display: flex; flex-direction: column; line-height: 32px; }
  .checks { display: flex; flex-direction: column; gap: 18px; margin: 12px 0 0 21px; line-height: 28px; }
  .checks span { margin-left: 12px; }
  .box { width: 28px; height: 28px; flex: none; border-radius: 7px; background: #fff; box-shadow: inset 0 0 0 1px #ccc, inset 0 2px 2px rgba(0, 0, 0, .1); }
  .box.on { background: #0f7bff; box-shadow: none; }
  .submit { width: 148px; margin: 24px 0 0 220px; }

  .work { width: 2136px; flex: none; display: flex; flex-direction: column; }
  .upper { height: 1378px; flex: none; display: flex; border-bottom: 10px solid #d4d4d4; }
  .view { width: 1780px; flex: none; border-right: 10px solid #d4d4d4; background: #fff; }
  .nl { font-size: 9.600px; text-anchor: middle; fill: #04090c; letter-spacing: -.1px; }
  .viewbar { height: 72px; border-top: 2px solid #d4d4d4; background: #eee; display: flex; font-size: 22px; }
  .toggle { flex: none; display: flex; align-items: center; justify-content: center; background: #ccc; border: 2px solid #adadad; }
  .t-share { width: 64px; height: 62px; margin: 4px 0 0 6px; padding-left: 1px; }
  .t-nodes { width: 65px; height: 66px; margin: 2px 0 0 22px; }
  .t-edges { width: 63px; height: 66px; margin: 2px 0 0 0; border-left: 0; }
  .sep { width: 2px; height: 66px; margin-top: 2px; flex: none; background: #d9d9d9; }
  .s1 { margin-left: 12px; }
  .s2 { margin-left: 24px; }
  .s4 { margin-left: 20px; }
  .s5 { margin-left: 20px; }
  .s7 { margin-left: 10px; }
  .short { height: 40px; margin: 14px 0 0 8px; }
  .vtitle { margin: 0 2px 0 13px; line-height: 67px; }
  .count { width: 133px; flex: none; margin: 10px 0 0 12px; display: flex; justify-content: space-between; color: #777; }
  .count div { display: flex; flex-direction: column; line-height: 28px; margin-top: -4px; font-size: 23px; }
  .second { margin-left: 8px; }

  .results { width: 356px; flex: none; }
  .results .phead { padding-left: 20px; }
  .results .group { width: 326px; margin-left: 14px; }
  .results .r1 { margin-top: 24px; height: 60px; }
  .results .r2 { margin-top: 20px; height: 60px; }
  .results .r3 { width: 334px; height: 373px; margin: 7px 0 0 10px; }
  .val { display: block; width: fit-content; line-height: 36px; margin-top: -1px; }
  .v1 { margin-left: 17px; }
  .v2 { margin-left: 28px; }
  .ranks { width: 299px; height: 369px; margin: 1px 0 0 17px; border: 2px solid #d4d4d4; background: #fff; font-size: 24px; }
  .rhead { display: flex; height: 38px; align-items: center; background: #eee; border-bottom: 2px solid #d4d4d4; font-size: 22px; padding-bottom: 1px; }
  .rk { width: 148px; padding-left: 8px; border-right: 2px solid #d4d4d4; line-height: 28px; }
  .nd { padding-left: 8px; width: 147px; border-right: 2px solid #d4d4d4; line-height: 28px; }
  .rrow { display: flex; height: 32px; line-height: 28px; border-bottom: 2px solid #000; border-right: 2px solid #000; }
  .rc { width: 146px; padding-left: 2px; }
  .nc { width: 147px; padding-left: 2px; border-left: 2px solid #000; }
  .save { width: 288px; margin: 20px 0 0 34px; }

  .tables { height: 212px; flex: none; display: flex; flex-direction: column; border-bottom: 2px solid #d4d4d4; }
  .ttools { height: 74px; flex: none; display: flex; border-bottom: 4px solid #d4d4d4; }
  .fx { width: 58px; margin-left: 60px; line-height: 63px; font-family: 'Liberation Serif', serif; font-style: italic; font-size: 37px; letter-spacing: .8px; color: #c0c0c0; }
  .grid { flex: 1; background: #fff; border: 0 solid #d4d4d4; border-width: 0 2px; overflow: hidden; }
  .gh { width: 700px; height: 46px; display: flex; align-items: center; background: #eee; border-bottom: 2px solid #d4d4d4; font-size: 22px; }
  .cornercell { width: 41px; height: 36px; padding-left: 6px; border-right: 2px solid #d4d4d4; flex: none; }
  .th { display: flex; align-items: center; height: 36px; flex: none; border-right: 2px solid #d4d4d4; padding-left: 7px; }
  .th span { line-height: 34px; padding-bottom: 2px; }
  .c1 { width: 297px; }
  .c1 span { margin-left: 29px; }
  .c2 { width: 180px; }
  .c2 span { margin-left: 31px; }
  .c3 { width: 182px; }
  .c3 span { margin-left: 31px; }
  .gbody { height: 44px; display: flex; font-size: 22px; overflow: hidden; }
  .rownum { width: 41px; flex: none; background: #eee; border-right: 2px solid #d4d4d4; padding: 30px 0 0 4px; }
  .rownum i { display: block; width: 30px; height: 2px; background: #d4d4d4; }
  .rows { flex: 1; }
  .tr { display: flex; height: 32px; line-height: 27px; }
  .d1 { width: 298px; margin-left: 11px; }
  .d2 { width: 180px; }
  .tscroll { width: 30px; flex: none; background: #fafafa; border-left: 2px solid #e8e8e8; padding: 2px 0 0 6px; }
  .tscroll i { display: block; width: 16px; height: 36px; border-radius: 8px; background: #c1c1c1; }

  .bottomtabs { height: 60px; flex: none; display: flex; border: 0 solid #d4d4d4; border-width: 2px 0; font-size: 26px; color: #404040; }
  .cmd { width: 1432px; margin-left: 78px; display: flex; align-items: center; gap: 10px; flex: none; }
  .btab { display: flex; align-items: center; gap: 11px; padding-left: 22px; flex: none; }
  .btab.active { background: #ccc; color: #000; }
  .t1 { width: 222px; }
  .t2 { width: 216px; }
  .t3 { width: 264px; }
  .t4 { width: 297px; }
  .t5 { width: 315px; }

  .status { flex: 1; display: flex; align-items: center; padding: 0 20px 2px; gap: 28px; }
  .sbtn { width: 80px; height: 48px; background: #fafafa; border: 2px solid #b4b4b4; display: flex; align-items: center; justify-content: center; }
  .mem { width: 56px; margin-left: auto; }
</style>
